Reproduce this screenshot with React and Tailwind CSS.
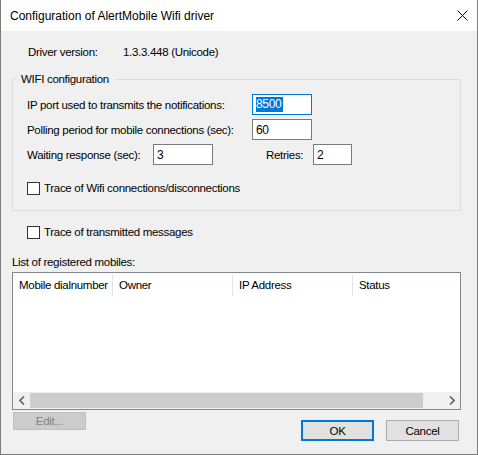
import React from 'react';

const font = { fontFamily: '"Liberation Sans", Arial, sans-serif' };

const TextBox = ({ value, width = 'w-[60px]', focused = false }) => (
    <div
        className={`h-[21px] ${width} shrink-0 bg-white border flex items-center pl-[3px] ${focused ? 'border-[#0078d7]' : 'border-[#7a7a7a]'}`}
    >
        {focused ? (
            <span className="bg-[#0078d7] text-white leading-[15px] pr-[1px] text-[12px]">{value}</span>
        ) : (
            <span className="text-[12px]">{value}</span>
        )}
    </div>
);

const CheckBox = ({ label }) => (
    <div className="flex items-center gap-[4px]">
        <div className="w-[13px] h-[13px] border border-[#333333] bg-white" />
        <span>{label}</span>
    </div>
);

const App = () => {
    const columns = [
        { name: 'Mobile dialnumber', w: 'w-[100px]' },
        { name: 'Owner', w: 'w-[120px]' },
        { name: 'IP Address', w: 'w-[120px]' },
        { name: 'Status', w: 'flex-1' },
    ];

    return (
        <div
            className="w-[478px] h-[455px] flex flex-col border-x border-b border-[#7a7a7a] bg-[#f0f0f0] text-[11.5px] tracking-[-0.3px] leading-[16px] text-black whitespace-nowrap"
            style={font}
        >
            {/* title bar */}
            <div className="h-[31px] bg-white flex items-center justify-between pl-[9px] pr-[9px] shrink-0">
                <span className="text-[12px] tracking-normal">Configuration of AlertMobile Wifi driver</span>
                <svg width="11" height="11" viewBox="0 0 11 11">
                    <path d="M0.5 0.5 L10.5 10.5 M10.5 0.5 L0.5 10.5" stroke="#111" strokeWidth="1" />
                </svg>
            </div>

            {/* body */}
            <div className="flex-1 pl-[11px] flex flex-col">
                <div className="mt-[13px] flex pl-[16px] h-[16px]">
                    <span className="w-[95px]">Driver version:</span>
                    <span>1.3.3.448 (Unicode)</span>
                </div>

                <fieldset className="mt-[11px] w-[449px] h-[140px] border border-[#dcdcdc] pl-[14px]">
                    <legend className="ml-[-12px] px-[6px]">WIFI configuration</legend>
                    <div className="flex flex-col mt-[7px]">
                        <div className="flex items-center h-[21px]">
                            <span className="w-[225px]">IP port used to transmits the notifications:</span>
                            <TextBox value="8500" focused />
                        </div>
                        <div className="flex items-center h-[21px] mt-[4px]">
                            <span className="w-[225px]">Polling period for mobile connections (sec):</span>
                            <TextBox value="60" />
                        </div>
                        <div className="flex items-center h-[21px] mt-[4px]">
                            <span className="w-[126px]">Waiting response (sec):</span>
                            <TextBox value="3" />
                            <span className="ml-[53px] w-[47px]">Retries:</span>
                            <TextBox value="2" width="w-[39px]" />
                        </div>
                        <div className="mt-[15px]">
                            <CheckBox label="Trace of Wifi connections/disconnections" />
                        </div>
                    </div>
                </fieldset>

                <div className="mt-[13px] pl-[15px]">
                    <CheckBox label="Trace of transmitted messages" />
                </div>

                <div className="mt-[14px]">List of registered mobiles:</div>

                <div className="mt-[2px] w-[449px] h-[138px] border border-[#828790] bg-white flex flex-col">
                    <div className="flex h-[24px] items-stretch">
                        {columns.map((c, i) => (
                            <div key={c.name} className={`${c.w} flex items-center pl-[6px] ${i < 3 ? 'border-r border-[#e5e5e5]' : ''} my-[1px]`}>
                                {c.name}
                            </div>
                        ))}
                    </div>
                    <div className="flex-1" />
                    <div className="h-[17px] flex bg-[#f0f0f0] items-center">
                        <div className="w-[17px] flex justify-center">
                            <svg width="6" height="9" viewBox="0 0 6 9">
                                <path d="M5 0.5 L1 4.5 L5 8.5" stroke="#606060" strokeWidth="1.6" fill="none" />
                            </svg>
                        </div>
                        <div className="w-[393px] h-[15px] bg-[#cdcdcd]" />
                        <div className="flex-1" />
                        <div className="w-[17px] flex justify-center">
                            <svg width="6" height="9" viewBox="0 0 6 9">
                                <path d="M1 0.5 L5 4.5 L1 8.5" stroke="#606060" strokeWidth="1.6" fill="none" />
                            </svg>
                        </div>
                    </div>
                </div>

                <div className="flex items-start mt-[2px]">
                    <button className="ml-[1px] w-[73px] h-[18px] bg-[#cccccc] border border-[#bfbfbf] text-[#838383] flex items-center justify-center">
                        Edit...
                    </button>
                    <button className="ml-[215px] mt-[8px] w-[73px] h-[21px] bg-[#e1e1e1] border-2 border-[#0078d7] flex items-center justify-center">
                        OK
                    </button>
                    <button className="ml-[12px] mt-[8px] w-[73px] h-[21px] bg-[#e1e1e1] border border-[#adadad] flex items-center justify-center">
                        Cancel
                    </button>
                </div>
            </div>
        </div>
    );
};

export default App;
